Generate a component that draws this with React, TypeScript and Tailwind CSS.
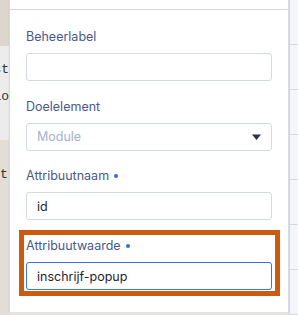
import React from 'react';

const labelCls = 'flex h-[20px] items-center gap-[5px] text-[12.5px] leading-[20px] text-[#4a598c]';
const inputCls =
  'h-[28px] w-full rounded-[3px] border border-[#d3d9e6] bg-white px-[10px] text-[12.5px] text-[#1f2533] outline-none';

const RequiredDot = () => <span className="inline-block h-[4px] w-[4px] rounded-full bg-[#2f6be6]" />;

const Field = ({ label, required, children }: { label: string; required?: boolean; children: React.ReactNode }) => (
  <div className="flex flex-col gap-[6px]">
    <div className={labelCls}>
      {label}
      {required && <RequiredDot />}
    </div>
    {children}
  </div>
);

const App = () => {
  return (
    <div
      className="flex h-[315px] w-[298px] overflow-hidden bg-[#e3ddd8]"
      style={{ fontFamily: 'Inter, "Noto Sans", sans-serif' }}
    >
      {/* Backdrop on the left */}
      <div className="flex w-[9px] flex-col overflow-hidden font-['Liberation_Mono',monospace] text-[13px] text-[#333]">
        <div className="h-[46px] bg-[#ddd5ce]" />
        <div className="flex h-[94px] flex-col bg-[#ececec] pt-[14px]">
          <div className="flex h-[20px] justify-end whitespace-nowrap leading-[20px]">st</div>
          <div className="mt-[7px] flex h-[20px] justify-end whitespace-nowrap leading-[20px]">lo</div>
        </div>
        <div className="flex flex-1 flex-col bg-[#e3ddd8] pt-[25px]">
          <div className="flex h-[20px] justify-start whitespace-nowrap leading-[20px]">tl</div>
        </div>
      </div>

      {/* Panel */}
      <div className="flex w-[280px] flex-col">
        <div className="flex h-[312px] flex-col border-x border-[#d6dbe6] bg-white shadow-[0_1px_2px_rgba(0,0,0,0.08)]">
          <div className="h-[10px] border-b border-[#d5dae6]" />
          <div className="flex flex-col gap-[16px] px-[16px] pt-[17px]">
            <Field label="Beheerlabel">
              <input className={inputCls} defaultValue="" />
            </Field>
            <Field label="Doelelement">
              <div className="flex h-[28px] items-center justify-between rounded-[3px] border border-[#d3d9e6] bg-white pl-[10px] pr-[10px]">
                <span className="text-[12.5px] text-[#a7b1cf]">Module</span>
                <svg width="9" height="6" viewBox="0 0 9 6">
                  <path d="M0 0.5h9L4.5 6z" fill="#2a3140" />
                </svg>
              </div>
            </Field>
            <div className="-mt-[1px]">
              <Field label="Attribuutnaam" required>
                <input className={inputCls} defaultValue="id" />
              </Field>
            </div>
            <div className="relative">
              <Field label="Attribuutwaarde" required>
                <input
                  className="h-[28px] w-full rounded-[3px] border-[1.5px] border-[#3b72e8] bg-white px-[10px] text-[12.5px] text-[#1f2533] outline-none"
                  defaultValue="inschrijf-popup"
                />
              </Field>
              <div className="pointer-events-none absolute -bottom-[6px] -left-[7px] -right-[8px] -top-[6px] border-[5px] border-[#cc5b10]" />
            </div>
          </div>
        </div>
        <div className="h-[3px] bg-[#e6e2de]" />
      </div>

      {/* Table rows on the right */}
      <div className="flex w-[9px] flex-col border-l border-[#d0d5e4] bg-[#f5f6f9]">
        {[0, 1, 2, 3, 4, 5, 6].map((i) => (
          <div key={i} className="h-[45px] shrink-0 border-b border-[#d5dae6]" />
        ))}
      </div>
    </div>
  );
};

export default App;
